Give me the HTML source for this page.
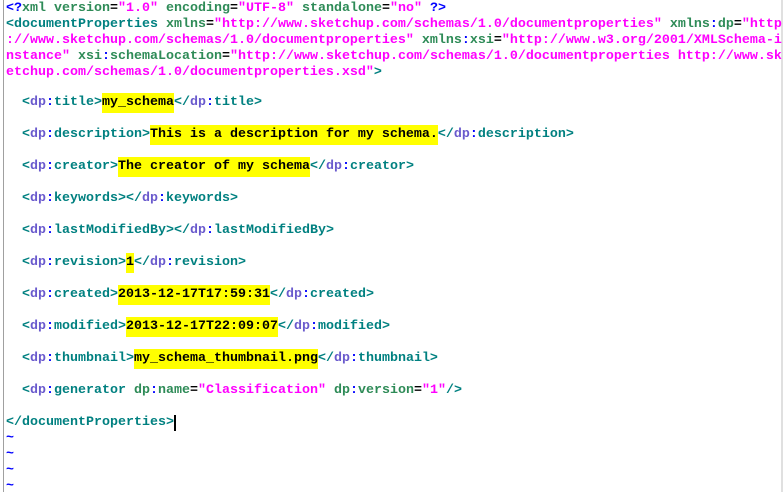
<!DOCTYPE html>
<html><head><meta charset="utf-8"><style>
html,body{margin:0;padding:0;width:784px;height:492px;background:#fff;overflow:hidden;position:relative}
.l{position:absolute;left:6px;height:16px;line-height:16px;white-space:pre;font-family:"Liberation Mono",monospace;font-size:13.33px;font-weight:bold;color:#008080}
.p{color:#6a5acd}.c{color:#0000ff}.a{color:#2e8b57}.v{color:#ff00ff}.e{color:#000}.b{color:#0000ff}
.h{background:#ffff00;color:#000;display:inline-block;line-height:20px;height:20px;margin:-2px 0;vertical-align:top}
#lb{position:absolute;left:3px;top:0;width:1px;height:492px;background:#a0a0a0}
#rb{position:absolute;left:781px;top:0;width:2px;height:492px;background:#e0e0e0}
.cur{display:inline-block;width:2px;height:16px;background:#000;vertical-align:top}
</style></head><body>
<div id="lb"></div><div id="rb"></div>
<div class="l" style="top:1px"><span class="b">&lt;?</span><span class="a">xml</span> <span class="a">version</span><span class="e">=</span><span class="v">"1.0"</span> <span class="a">encoding</span><span class="e">=</span><span class="v">"UTF-8"</span> <span class="a">standalone</span><span class="e">=</span><span class="v">"no"</span> <span class="b">?&gt;</span></div>
<div class="l" style="top:17px">&lt;documentProperties <span class="a">xmlns</span><span class="e">=</span><span class="v">"http://www.sketchup.com/schemas/1.0/documentproperties"</span> <span class="a">xmlns</span><span class="c">:</span><span class="a">dp</span><span class="e">=</span><span class="v">"http</span></div>
<div class="l" style="top:33px"><span class="v">://www.sketchup.com/schemas/1.0/documentproperties"</span> <span class="a">xmlns</span><span class="c">:</span><span class="a">xsi</span><span class="e">=</span><span class="v">"http://www.w3.org/2001/XMLSchema-i</span></div>
<div class="l" style="top:49px"><span class="v">nstance"</span> <span class="a">xsi</span><span class="c">:</span><span class="a">schemaLocation</span><span class="e">=</span><span class="v">"http://www.sketchup.com/schemas/1.0/documentproperties http://www.sk</span></div>
<div class="l" style="top:65px"><span class="v">etchup.com/schemas/1.0/documentproperties.xsd"</span>&gt;</div>
<div class="l" style="top:95px">  &lt;<span class="p">dp</span><span class="c">:</span>title&gt;<span class="h">my_schema</span>&lt;/<span class="p">dp</span><span class="c">:</span>title&gt;</div>
<div class="l" style="top:127px">  &lt;<span class="p">dp</span><span class="c">:</span>description&gt;<span class="h">This is a description for my schema.</span>&lt;/<span class="p">dp</span><span class="c">:</span>description&gt;</div>
<div class="l" style="top:159px">  &lt;<span class="p">dp</span><span class="c">:</span>creator&gt;<span class="h">The creator of my schema</span>&lt;/<span class="p">dp</span><span class="c">:</span>creator&gt;</div>
<div class="l" style="top:191px">  &lt;<span class="p">dp</span><span class="c">:</span>keywords&gt;&lt;/<span class="p">dp</span><span class="c">:</span>keywords&gt;</div>
<div class="l" style="top:223px">  &lt;<span class="p">dp</span><span class="c">:</span>lastModifiedBy&gt;&lt;/<span class="p">dp</span><span class="c">:</span>lastModifiedBy&gt;</div>
<div class="l" style="top:255px">  &lt;<span class="p">dp</span><span class="c">:</span>revision&gt;<span class="h">1</span>&lt;/<span class="p">dp</span><span class="c">:</span>revision&gt;</div>
<div class="l" style="top:287px">  &lt;<span class="p">dp</span><span class="c">:</span>created&gt;<span class="h">2013-12-17T17:59:31</span>&lt;/<span class="p">dp</span><span class="c">:</span>created&gt;</div>
<div class="l" style="top:319px">  &lt;<span class="p">dp</span><span class="c">:</span>modified&gt;<span class="h">2013-12-17T22:09:07</span>&lt;/<span class="p">dp</span><span class="c">:</span>modified&gt;</div>
<div class="l" style="top:351px">  &lt;<span class="p">dp</span><span class="c">:</span>thumbnail&gt;<span class="h">my_schema_thumbnail.png</span>&lt;/<span class="p">dp</span><span class="c">:</span>thumbnail&gt;</div>
<div class="l" style="top:383px">  &lt;<span class="p">dp</span><span class="c">:</span>generator <span class="a">dp</span><span class="c">:</span><span class="a">name</span><span class="e">=</span><span class="v">"Classification"</span> <span class="a">dp</span><span class="c">:</span><span class="a">version</span><span class="e">=</span><span class="v">"1"</span>/&gt;</div>
<div class="l" style="top:415px">&lt;/documentProperties&gt;<span class="cur"></span></div>
<div class="l b" style="top:431px;color:#0000ff">~</div>
<div class="l b" style="top:447px;color:#0000ff">~</div>
<div class="l b" style="top:463px;color:#0000ff">~</div>
<div class="l b" style="top:479px;color:#0000ff">~</div>
</body></html>
